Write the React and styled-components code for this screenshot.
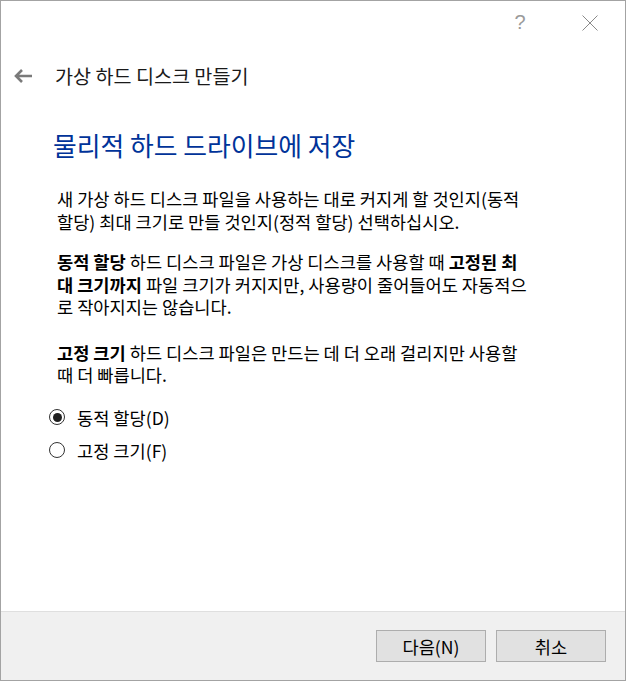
import React from "react";
import styled, { createGlobalStyle } from "styled-components";

const GlobalStyle = createGlobalStyle`
  html, body {
    margin: 0;
    padding: 0;
    background: #ffffff;
  }
  body {
    font-family: "Noto Sans CJK KR", "Noto Sans", sans-serif;
    color: #000000;
  }
`;

const Window = styled.div`
  box-sizing: border-box;
  width: 626px;
  height: 681px;
  border: 1px solid #a3a3a3;
  background: #ffffff;
  display: flex;
  flex-direction: column;
`;

const TitleBar = styled.div`
  height: 43px;
  display: flex;
  justify-content: flex-end;
`;

const CaptionButton = styled.div`
  width: 70px;
  height: 43px;
  display: flex;
  align-items: center;
  justify-content: center;
  color: #9a9a9a;
  font-family: "Liberation Sans", sans-serif;
  font-size: 20px;
`;

const Body = styled.div`
  flex: 1;
  display: flex;
  flex-direction: column;
`;

const Header = styled.div`
  display: flex;
  align-items: center;
  height: 32px;
  margin-top: 16px;
  padding-left: 12px;
  gap: 22px;
`;

const HeaderTitle = styled.div`
  font-size: 19.6px;
  line-height: 32px;
  color: #1a1a1a;
  white-space: nowrap;
`;

const Content = styled.div`
  padding: 0 0 0 48px;
  display: flex;
  flex-direction: column;
`;

const Heading = styled.h1`
  margin: 36px 0 0;
  padding-left: 4px;
  font-size: 25.8px;
  font-weight: normal;
  line-height: 34px;
  color: #003399;
  white-space: nowrap;
`;

const Paragraph = styled.p`
  margin: ${(p) => p.$top}px 0 0;
  padding-left: 8px;
  font-size: 17.6px;
  line-height: 22.5px;
  white-space: nowrap;
  color: #000000;
  b {
    font-weight: bold;
  }
`;

const RadioGroup = styled.div`
  margin-top: 19px;
  display: flex;
  flex-direction: column;
  gap: 10px;
`;

const RadioRow = styled.label`
  display: flex;
  align-items: center;
  height: 23px;
  gap: 12px;
  font-size: 17.6px;
  color: #000000;
  white-space: nowrap;
`;

const RadioCircle = styled.span`
  box-sizing: border-box;
  width: 16px;
  height: 16px;
  border-radius: 50%;
  border: 1px solid #333333;
  display: flex;
  align-items: center;
  justify-content: center;
  &::after {
    content: "";
    width: 9px;
    height: 9px;
    border-radius: 50%;
    background: #1f1f1f;
    display: ${(p) => (p.$checked ? "block" : "none")};
  }
`;

const Footer = styled.div`
  height: 69px;
  border-top: 1px solid #dfdfdf;
  background: #f0f0f0;
  display: flex;
  justify-content: flex-end;
  align-items: flex-start;
  padding: 18px 19px 0 0;
  box-sizing: border-box;
  gap: 10px;
`;

const Button = styled.button`
  box-sizing: border-box;
  width: 110px;
  height: 32px;
  background: #e1e1e1;
  border: 1px solid #adadad;
  font-family: "Noto Sans CJK KR", "Noto Sans", sans-serif;
  font-size: 17.6px;
  color: #000000;
  padding: 0;
`;

const BackArrow = () => (
  <svg width="20" height="16" viewBox="0 0 20 16">
    <path d="M19 8H3M9 2L3 8L9 14" stroke="#7a7a7a" strokeWidth="2.6" fill="none" />
  </svg>
);

const CloseIcon = () => (
  <svg width="16" height="16" viewBox="0 0 16 16">
    <path d="M0.5 0.5L15.5 15.5M15.5 0.5L0.5 15.5" stroke="#8a8a8a" strokeWidth="1" fill="none" />
  </svg>
);

const App = () => (
  <>
    <GlobalStyle />
    <Window>
      <TitleBar>
        <CaptionButton>?</CaptionButton>
        <CaptionButton>
          <CloseIcon />
        </CaptionButton>
      </TitleBar>
      <Body>
        <Header>
          <BackArrow />
          <HeaderTitle>가상 하드 디스크 만들기</HeaderTitle>
        </Header>
        <Content>
          <Heading>물리적 하드 드라이브에 저장</Heading>
          <Paragraph $top={26}>
            새 가상 하드 디스크 파일을 사용하는 대로 커지게 할 것인지(동적
            <br />
            할당) 최대 크기로 만들 것인지(정적 할당) 선택하십시오.
          </Paragraph>
          <Paragraph $top={18}>
            <b>동적 할당</b> 하드 디스크 파일은 가상 디스크를 사용할 때 <b>고정된 최</b>
            <br />
            <b>대 크기까지</b> 파일 크기가 커지지만, 사용량이 줄어들어도 자동적으
            <br />
            로 작아지지는 않습니다.
          </Paragraph>
          <Paragraph $top={23}>
            <b>고정 크기</b> 하드 디스크 파일은 만드는 데 더 오래 걸리지만 사용할
            <br />
            때 더 빠릅니다.
          </Paragraph>
          <RadioGroup>
            <RadioRow>
              <RadioCircle $checked />
              동적 할당(D)
            </RadioRow>
            <RadioRow>
              <RadioCircle />
              고정 크기(F)
            </RadioRow>
          </RadioGroup>
        </Content>
      </Body>
      <Footer>
        <Button>다음(N)</Button>
        <Button>취소</Button>
      </Footer>
    </Window>
  </>
);

export default App;
